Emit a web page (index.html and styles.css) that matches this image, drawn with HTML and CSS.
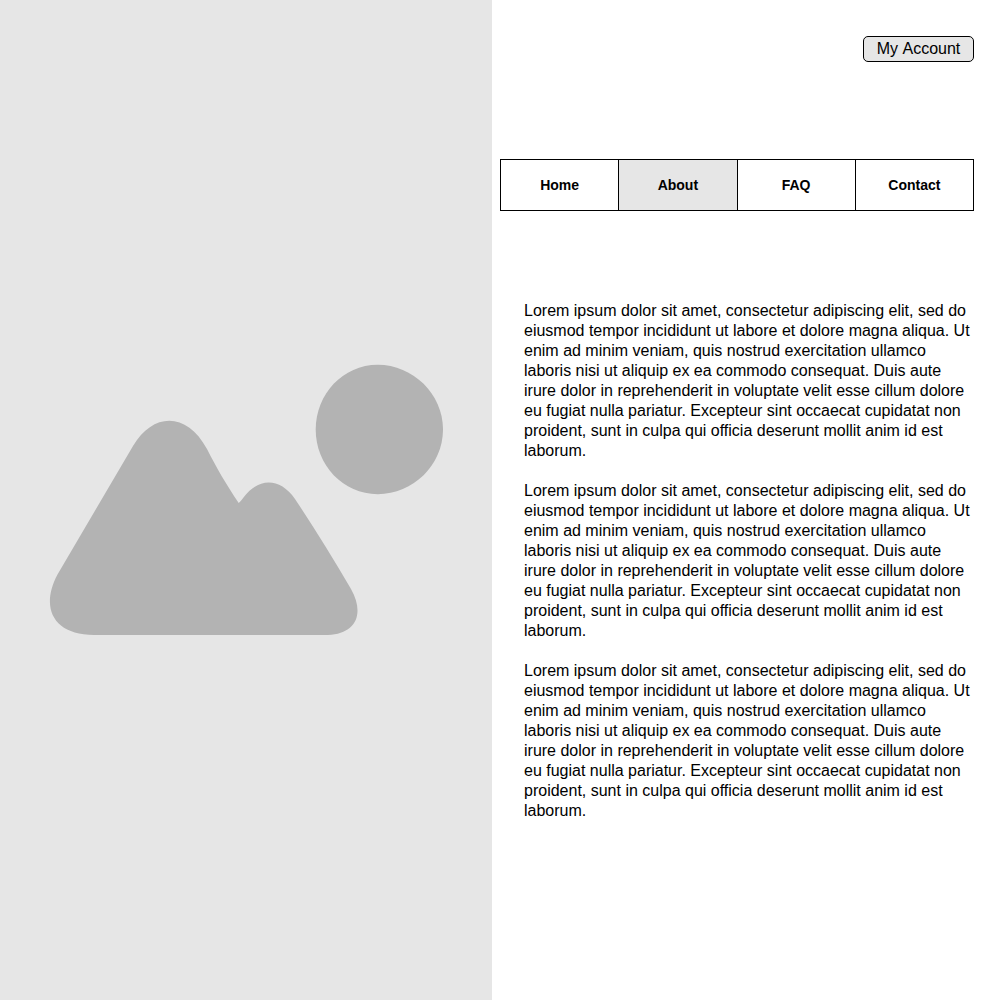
FILE: index.html
```html
<!DOCTYPE html>
<html lang="en">
<head>
<meta charset="utf-8">
<title>About</title>
<link rel="stylesheet" href="styles.css">
</head>
<body>
<div class="page">
  <aside class="hero">
    <svg class="hero-image" viewBox="0 0 492 1000" aria-hidden="true">
      <path d="M377.700 364.700 C413 364.700 443 394 443 429.500 C443 465 413 494.200 377.700 494.200 C343 494.200 315.700 465 315.700 429.500 C315.700 394 343 364.700 377.700 364.700 Z"/>
      <path d="M94 635 C53 635 40 607.500 57.500 574.500 L133 446 C153 412 187 411.500 207 449 C216 467 226 484 238.700 503 Q241 501 243.500 497.500 C258 477.500 280 477 295 499 Q323 541 351 589 C365 614 356 634 328 635 Z"/>
    </svg>
  </aside>
  <main class="content">
    <header class="top">
      <button class="account" type="button">My Account</button>
    </header>
    <nav class="tabs">
      <a class="tab">Home</a>
      <a class="tab tab-active">About</a>
      <a class="tab">FAQ</a>
      <a class="tab">Contact</a>
    </nav>
    <article class="copy">
      <p>Lorem ipsum dolor sit amet, consectetur adipiscing elit, sed do eiusmod tempor incididunt ut labore et dolore magna aliqua. Ut enim ad minim veniam, quis nostrud exercitation ullamco laboris nisi ut aliquip ex ea commodo consequat. Duis aute irure dolor in reprehenderit in voluptate velit esse cillum dolore eu fugiat nulla pariatur. Excepteur sint occaecat cupidatat non proident, sunt in culpa qui officia deserunt mollit anim id est laborum.</p>
      <p>Lorem ipsum dolor sit amet, consectetur adipiscing elit, sed do eiusmod tempor incididunt ut labore et dolore magna aliqua. Ut enim ad minim veniam, quis nostrud exercitation ullamco laboris nisi ut aliquip ex ea commodo consequat. Duis aute irure dolor in reprehenderit in voluptate velit esse cillum dolore eu fugiat nulla pariatur. Excepteur sint occaecat cupidatat non proident, sunt in culpa qui officia deserunt mollit anim id est laborum.</p>
      <p>Lorem ipsum dolor sit amet, consectetur adipiscing elit, sed do eiusmod tempor incididunt ut labore et dolore magna aliqua. Ut enim ad minim veniam, quis nostrud exercitation ullamco laboris nisi ut aliquip ex ea commodo consequat. Duis aute irure dolor in reprehenderit in voluptate velit esse cillum dolore eu fugiat nulla pariatur. Excepteur sint occaecat cupidatat non proident, sunt in culpa qui officia deserunt mollit anim id est laborum.</p>
    </article>
  </main>
</div>
</body>
</html>
```
FILE: styles.css
```css
* {
  box-sizing: border-box;
}

body {
  margin: 0;
  background: #fff;
  color: #000;
  font: 16px/20px "Liberation Sans", Arial, sans-serif;
}

.page {
  display: grid;
  grid-template-columns: 492px 1fr;
  height: 1000px;
}

.hero {
  background: #e6e6e6;
}

.hero-image {
  display: block;
  width: 492px;
  height: 1000px;
  fill: #b3b3b3;
}

.content {
  padding: 36px 26px 0 8px;
}

.top {
  display: flex;
  justify-content: flex-end;
  margin-bottom: 97px;
}

.account {
  width: 111px;
  height: 26px;
  padding: 0;
  border: 1px solid #000;
  border-radius: 5px;
  background: #e6e6e6;
  color: #000;
  font: inherit;
  font-kerning: none;
}

.tabs {
  display: grid;
  grid-template-columns: repeat(4, 1fr);
  height: 52px;
  border: 1px solid #000;
  border-left: 0;
}

.tab {
  display: flex;
  align-items: center;
  justify-content: center;
  border-left: 1px solid #000;
  font-size: 14px;
  font-weight: bold;
}

.tab-active {
  background: #e6e6e6;
}

.copy {
  display: grid;
  gap: 20px;
  margin-top: 90px;
  padding-left: 24px;
}

.copy p {
  margin: 0;
}
```
